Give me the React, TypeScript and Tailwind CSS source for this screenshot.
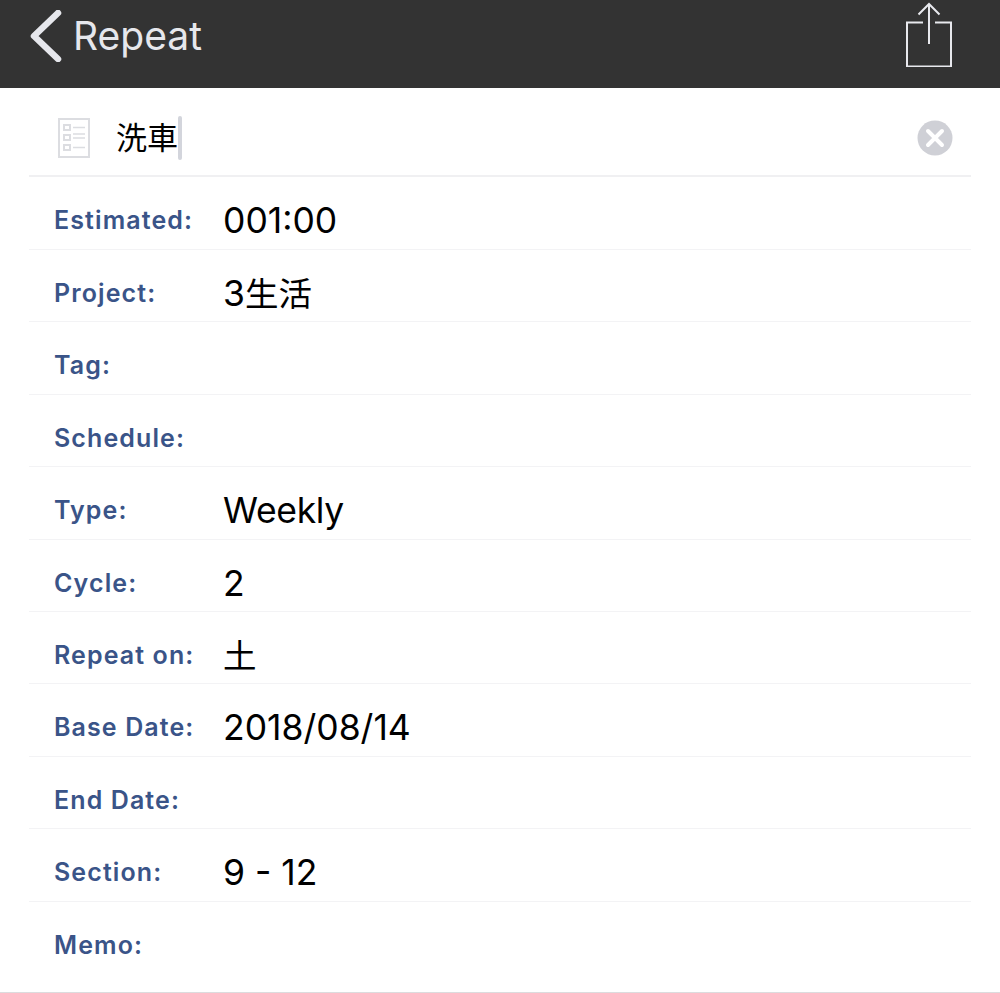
import React from "react";

const rows: [string, React.ReactNode][] = [
  ["Estimated:", "001:00"],
  ["Project:", <>3<span className="text-[33.5px]">生活</span></>],
  ["Tag:", ""],
  ["Schedule:", ""],
  ["Type:", <span className="tracking-[-0.3px]">Weekly</span>],
  ["Cycle:", "2"],
  ["Repeat on:", <span className="text-[33.5px]">土</span>],
  ["Base Date:", "2018/08/14"],
  ["End Date:", ""],
  ["Section:", "9 - 12"],
  ["Memo:", ""],
];

export default function App() {
  return (
    <div className="w-[1000px] h-[993px] bg-white overflow-hidden flex flex-col font-['Inter','Noto_Sans_CJK_JP',sans-serif]">
      <header className="h-[88px] shrink-0 bg-[#333333] flex items-center justify-between pl-[30px] pr-[48px]">
        <div className="flex items-center gap-[11px] -mt-[17px]">
          <svg width="32" height="52" viewBox="0 0 32 52" fill="none">
            <path d="M28 3 L4 26 L28 49" stroke="#e6e7ec" strokeWidth="6.5" strokeLinecap="round" strokeLinejoin="round" />
          </svg>
          <span className="text-[39px] leading-none text-[#e6e7ec] -mt-[1px]">Repeat</span>
        </div>
        <svg width="46" height="66" viewBox="0 0 46 66" fill="none" stroke="#e8e9ee" strokeWidth="2" className="-mt-[20px]">
          <path d="M17 21.5 H1 V65.5 H45 V21.5 H29" />
          <path d="M23 43 V3" />
          <path d="M12.5 13.5 L23 3 L33.5 13.5" />
        </svg>
      </header>

      <div className="mx-[29px] h-[89.4px] shrink-0 border-b-2 border-[#f0f0f2] flex items-center pt-[13px] pl-[29px] pr-[18px]">
        <svg width="32" height="40" viewBox="0 0 32 40" fill="none" stroke="#dcdde1" className="shrink-0">
          <rect x="1" y="1" width="30" height="38" strokeWidth="2" />
          <rect x="6" y="7" width="6" height="5" strokeWidth="2" />
          <rect x="6" y="17" width="6" height="5" strokeWidth="2" />
          <rect x="6" y="27" width="6" height="5" strokeWidth="2" />
          <path d="M15 9.5 H27 M15 16 H27 M15 20 H27 M15 29.5 H27" strokeWidth="1.5" />
        </svg>
        <div className="ml-[26px] flex items-center flex-1">
          <span className="text-[31px] leading-none text-black -mt-[2px]">洗車</span>
          <span className="w-[4px] h-[44px] rounded-full bg-[#d3d5dc]" />
        </div>
        <svg width="36" height="36" viewBox="0 0 36 36" className="shrink-0">
          <circle cx="18" cy="18" r="17.5" fill="#cfd0d6" />
          <path d="M11 11 L25 25 M25 11 L11 25" stroke="#ffffff" strokeWidth="4" strokeLinecap="round" />
        </svg>
      </div>

      <div className="flex-1 flex flex-col">
        {rows.map(([label, value], i) => (
          <div
            key={label}
            className={
              i < rows.length - 1
                ? "mx-[29px] h-[72.45px] shrink-0 flex items-center border-b border-[#f3f3f5] pt-[16px] pl-[25px]"
                : "mx-[29px] h-[72.45px] shrink-0 flex items-center pt-[16px] pl-[25px]"
            }
          >
            <span className="w-[169px] shrink-0 text-[25px] font-semibold tracking-[1.1px] text-[#3a5488] whitespace-nowrap">
              {label}
            </span>
            <span className="text-[35.5px] leading-none text-black whitespace-nowrap">{value}</span>
          </div>
        ))}
      </div>
      <div className="h-px shrink-0 bg-[#dcdcde]" />
    </div>
  );
}
